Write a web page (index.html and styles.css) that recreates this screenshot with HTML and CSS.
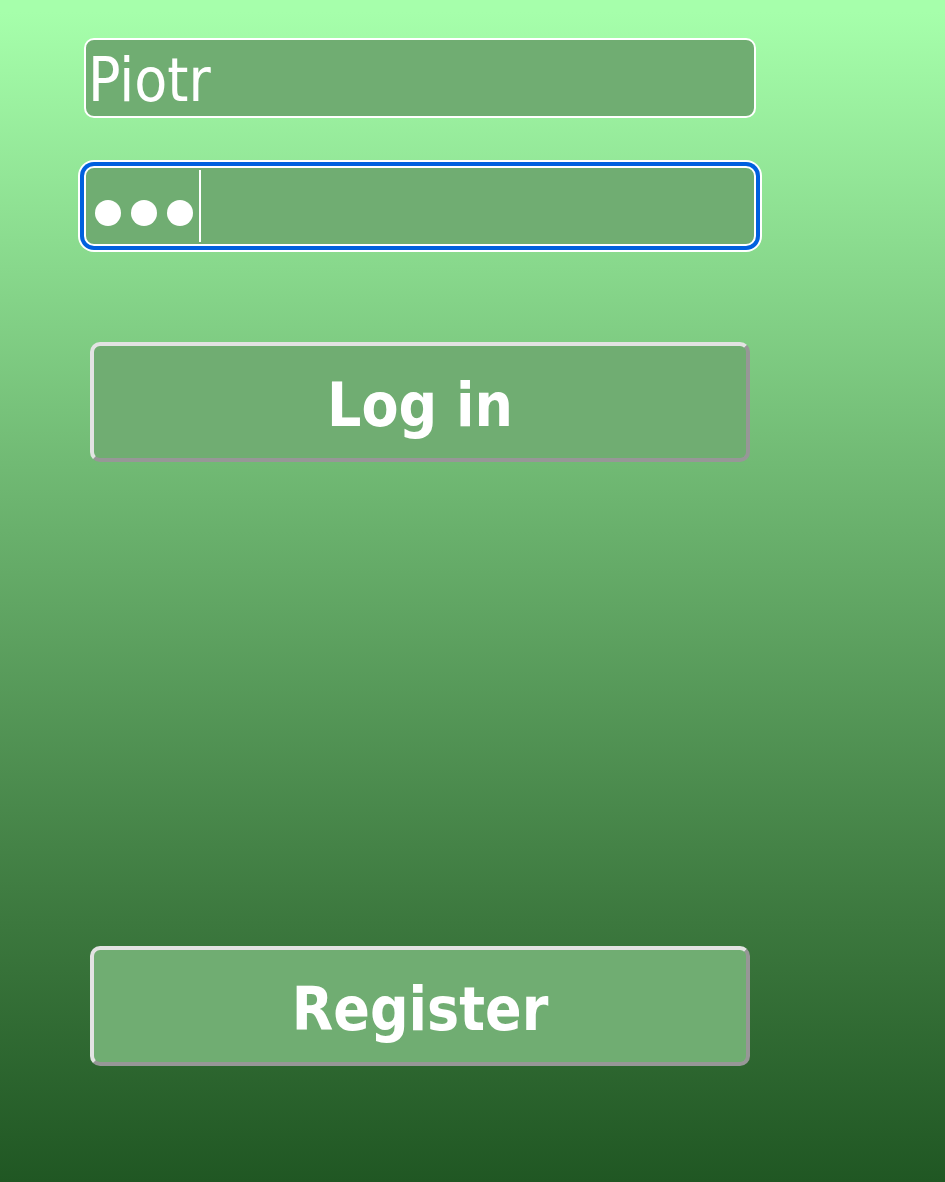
FILE: index.html
```html
<!DOCTYPE html>
<html lang="en">
<head>
<meta charset="utf-8">
<meta name="viewport" content="width=device-width, initial-scale=1">
<title>Log in</title>
<link rel="stylesheet" href="styles.css">
</head>
<body>
<main class="page">
  <form class="login">
    <input class="field" type="text" value="Piotr" aria-label="Username">
    <div class="secret">
      <input class="field field-active" type="password" value="abc" aria-label="Password">
      <div class="mask" aria-hidden="true">
        <span class="dot"></span>
        <span class="dot"></span>
        <span class="dot"></span>
      </div>
      <span class="caret"></span>
    </div>
    <button class="action" type="button">Log in</button>
  </form>
  <button class="action register" type="button">Register</button>
</main>
</body>
</html>
```
FILE: styles.css
```css
* { box-sizing: border-box; }

body {
  margin: 0;
  font-family: Tahoma, "DejaVu Sans Condensed", "DejaVu Sans", sans-serif;
}

.page {
  display: flex;
  flex-direction: column;
  min-height: 100vh;
  padding: 38px 20% 116px 84px;
  background: linear-gradient(#a6ffab 0%, #a6ffab 1%, #6db570 42%, #3c783e 78%, #205723 100%);
}

.login {
  display: flex;
  flex-direction: column;
}

.field {
  display: block;
  width: 100%;
  height: 80px;
  padding: 4px 2px 0;
  border: 2px solid #fff;
  border-radius: 10px;
  background: #70ad72;
  color: #fff;
  font-family: inherit;
  font-size: 60px;
  outline: none;
}

.secret {
  position: relative;
  margin-top: 48px;
}

.field-active {
  box-shadow: 0 0 0 4px #0060df, 0 0 0 6px #fff;
  color: transparent;
}

.mask {
  position: absolute;
  top: 34px;
  left: 11px;
  display: flex;
  gap: 10px;
  pointer-events: none;
}

.dot {
  width: 26px;
  height: 26px;
  border-radius: 50%;
  background: #fff;
}

.caret {
  position: absolute;
  top: 4px;
  left: 115px;
  width: 2px;
  height: 72px;
  background: #fff;
}

.action {
  height: 120px;
  margin: 96px 6px 0;
  padding: 6px 6px 0;
  border: 4px solid;
  border-color: #e3e3e3 #979797 #979797 #e3e3e3;
  border-radius: 10px;
  background: #70ad72;
  color: #fff;
  font-family: inherit;
  font-size: 60px;
  font-weight: 700;
}

.register {
  margin-top: auto;
}
```
